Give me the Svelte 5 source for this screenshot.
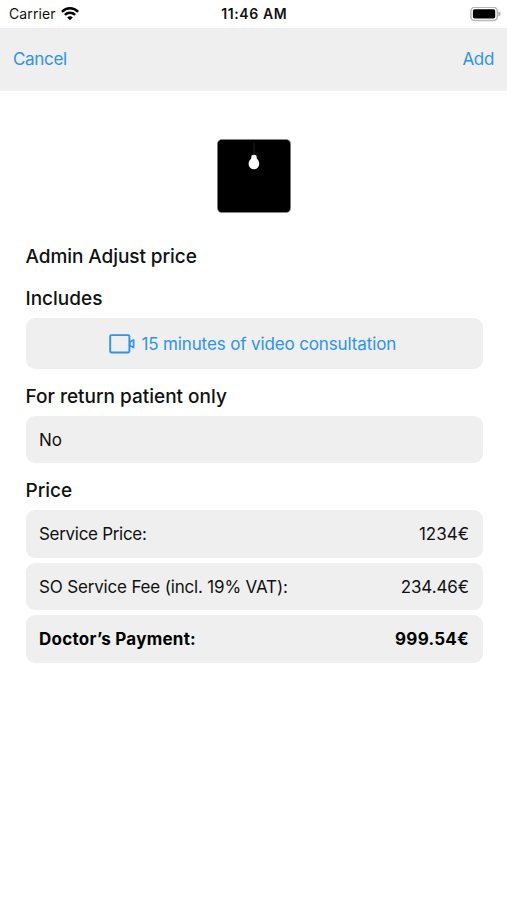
<script>
  const prices = [
    { label: 'Service Price:', amount: '1234€', cls: 'service' },
    { label: 'SO Service Fee (incl. 19% VAT):', amount: '234.46€', cls: 'fee' },
    { label: 'Doctor’s Payment:', amount: '999.54€', cls: 'total' }
  ];
</script>

<div class="screen">
  <div class="status">
    <div class="side">
      <span class="carrier">Carrier</span>
      <svg class="wifi" width="18" height="14" viewBox="0 0 18 14" fill="none" stroke="#000" stroke-width="2.5">
        <path d="M0.9 4.8C5.4 0.2 12.6 0.2 17.1 4.8" />
        <path d="M3.9 7.9C6.7 5.1 11.3 5.1 14.1 7.9" />
        <path d="M9 13.3L6.2 10.4C7.8 8.9 10.2 8.9 11.8 10.4Z" fill="#000" stroke="none" />
      </svg>
    </div>
    <span class="time">11:46 AM</span>
    <div class="side right">
      <svg width="31" height="15" viewBox="0 0 31 15">
        <rect x="0.9" y="0.3" width="26.4" height="13.2" rx="3.8" fill="#fff" stroke="#b8b8b8" stroke-width="1.5" />
        <rect x="2.9" y="2.2" width="22.3" height="9.4" rx="1.8" fill="#000" />
        <path d="M28.4 4.6C31.2 5.4 31.2 8.6 28.4 9.4Z" fill="#aaa" />
      </svg>
    </div>
  </div>

  <header>
    <button class="cancel">Cancel</button>
    <button class="add">Add</button>
  </header>

  <main>
    <svg class="thumb" width="74" height="74" viewBox="0 0 74 74">
      <rect x="0.4" y="0.4" width="73.2" height="73.2" rx="4.5" fill="#000" stroke="#888" stroke-width="0.6" />
      <path d="M37 4V16" stroke="#222" stroke-width="1" />
      <path d="M34.6 16.4Q37 15 39.4 16.4L39.8 19.5C41.4 21.2 42.2 22.6 42.2 25A5.3 5.3 0 0 1 31.6 25C31.6 22.6 32.6 21.2 34.2 19.5Z" fill="#fff" />
    </svg>

    <h1>Admin Adjust price</h1>

    <h2 class="includes">Includes</h2>
    <div class="card video">
      <svg width="26" height="20" viewBox="0 0 26 20" fill="none" stroke="#2c93ee" stroke-width="1.9" stroke-linejoin="round">
        <rect x="1.2" y="1.1" width="19.2" height="17.4" rx="1.2" />
        <path d="M20.8 8L24.6 6V13.6L20.8 11.6Z" stroke-width="1.7" />
      </svg>
      <span>15 minutes of video consultation</span>
    </div>

    <h2 class="patient">For return patient only</h2>
    <div class="card"><span>No</span></div>

    <h2 class="price">Price</h2>
    <div class="prices">
      {#each prices as row}
        <div class="card {row.cls}">
          <span class="label">{row.label}</span>
          <span class="amount">{row.amount}</span>
        </div>
      {/each}
    </div>
  </main>
</div>

<style>
  :global(body) {
    margin: 0;
    background: #fff;
  }
  .screen {
    height: 900px;
    overflow: hidden;
    background: #fff;
    color: #111;
    font-family: Inter, "Liberation Sans", sans-serif;
    font-size: 17px;
    white-space: nowrap;
  }
  .status {
    display: flex;
    align-items: center;
    height: 28px;
    padding: 0 6px 0 9px;
    box-sizing: border-box;
    font-size: 14px;
    line-height: 28px;
  }
  .side {
    flex: 1;
    display: flex;
    align-items: center;
    gap: 5.5px;
  }
  .right {
    justify-content: flex-end;
  }
  .carrier {
    letter-spacing: 0.12px;
  }
  .time {
    font-weight: 600;
    letter-spacing: 0.6px;
    margin-right: 1.5px;
  }
  header {
    display: flex;
    align-items: center;
    justify-content: space-between;
    height: 63px;
    padding: 0 13px 1px;
    box-sizing: border-box;
    background: #efefef;
  }
  button {
    padding: 0;
    border: 0;
    background: none;
    color: #2c93ee;
    font: inherit;
    line-height: 24px;
    letter-spacing: -0.33px;
  }
  main {
    padding: 48px 24.5px 0 25.5px;
  }
  .thumb {
    display: block;
    margin: 0 auto;
  }
  h1,
  h2 {
    margin: 0;
    font-size: 19px;
    font-weight: 500;
    line-height: 24px;
  }
  h1 {
    margin-top: 32px;
    letter-spacing: -0.07px;
  }
  .includes {
    margin-top: 18px;
  }
  .patient {
    margin-top: 16px;
  }
  .price {
    margin-top: 16px;
  }
  .card {
    display: flex;
    align-items: center;
    justify-content: space-between;
    height: 47px;
    margin-top: 7px;
    padding: 0 13.5px;
    box-sizing: border-box;
    border-radius: 9px;
    background: #efefef;
  }
  .video {
    height: 51px;
    justify-content: center;
    gap: 6px;
    padding-right: 16px;
    color: #2c93ee;
    letter-spacing: -0.13px;
  }
  .prices {
    display: flex;
    flex-direction: column;
    gap: 5px;
    margin-top: 7px;
  }
  .prices .card {
    height: 47.5px;
    margin-top: 0;
    padding-top: 1px;
  }
  .service .label {
    letter-spacing: -0.3px;
  }
  .fee .label {
    letter-spacing: -0.17px;
  }
  .fee .amount {
    letter-spacing: -0.1px;
  }
  .total {
    font-weight: 700;
    color: #000;
    letter-spacing: 0.25px;
  }
</style>
